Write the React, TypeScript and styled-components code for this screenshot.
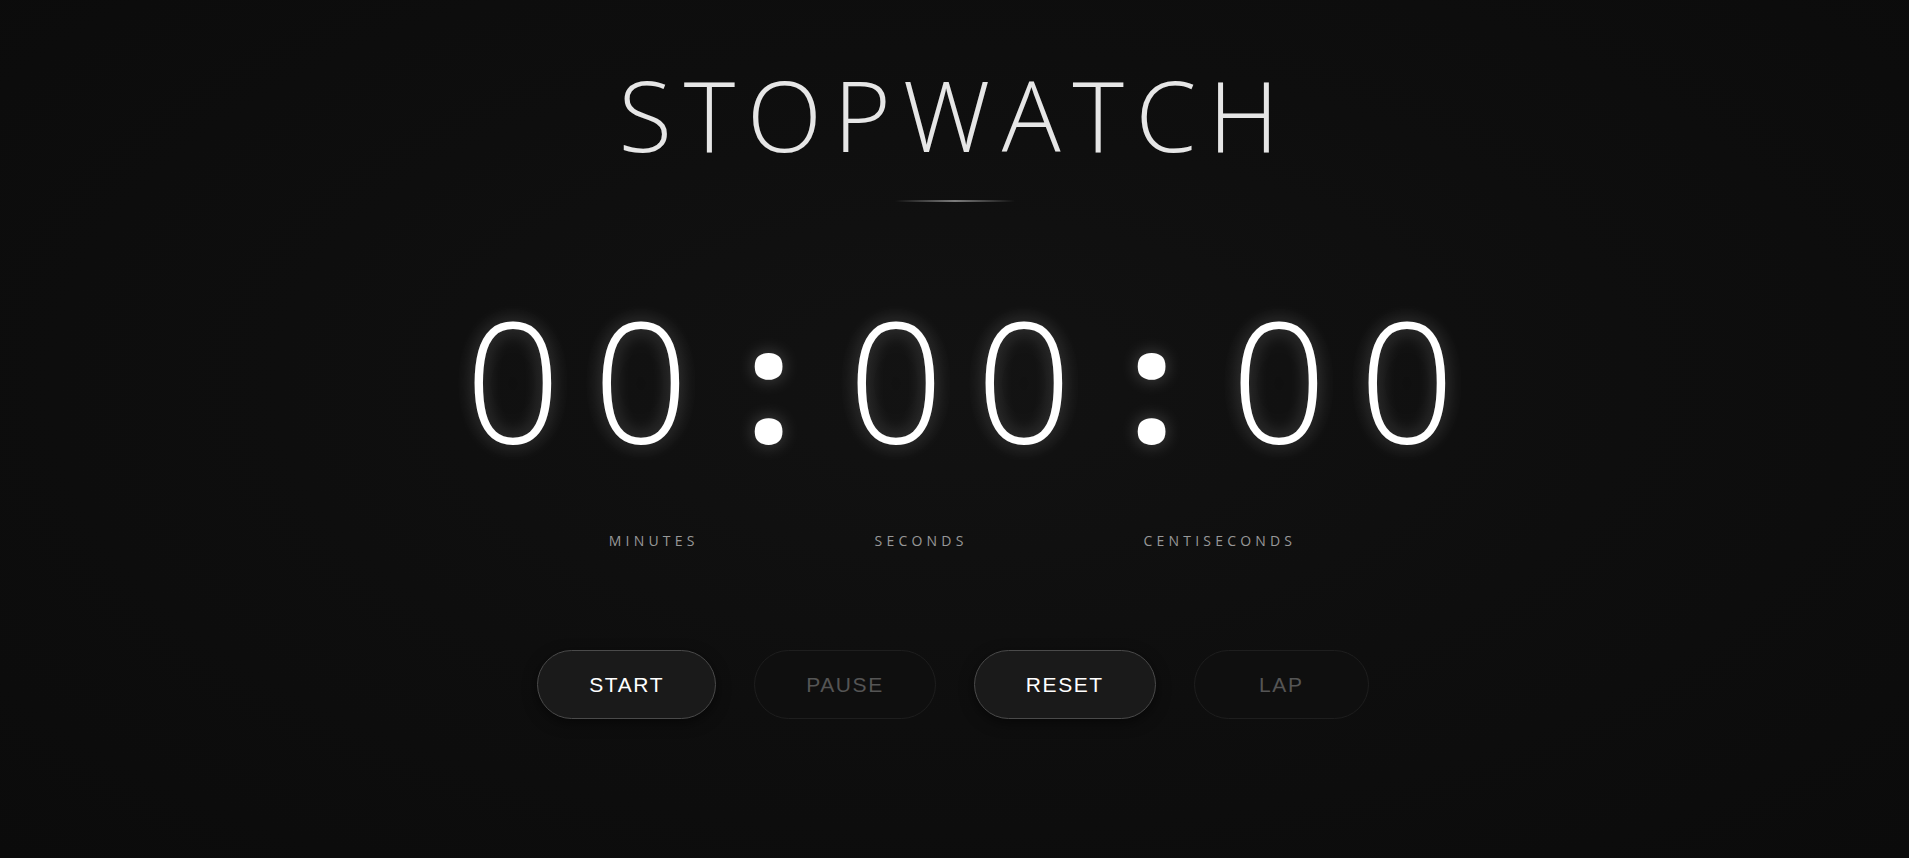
import React from "react";
import styled, { createGlobalStyle } from "styled-components";

const GlobalStyle = createGlobalStyle`
  html, body {
    margin: 0;
    padding: 0;
    height: 100%;
    background: #0c0c0c;
  }
  #root { min-height: 100%; }
`;

const Page = styled.main`
  min-height: 858px;
  box-sizing: border-box;
  display: flex;
  flex-direction: column;
  align-items: center;
  padding-top: 65px;
  background: radial-gradient(ellipse at 50% 45%, #121212 0%, #0e0e0e 50%, #0b0b0b 100%);
  font-family: "Open Sans", "Liberation Sans", sans-serif;
`;

const Title = styled.h1`
  margin: 0;
  font-family: "Open Sans", "Liberation Sans", sans-serif;
  font-weight: 300;
  font-size: 98px;
  line-height: 1;
  letter-spacing: 0.12em;
  color: #e6e6e6;
`;

const Divider = styled.div`
  width: 120px;
  height: 2px;
  margin-top: 37px;
  background: linear-gradient(90deg, rgba(255,255,255,0) 0%, rgba(255,255,255,0.45) 50%, rgba(255,255,255,0) 100%);
`;

const Display = styled.div`
  margin-top: 86px;
  display: flex;
  align-items: baseline;
  height: 180px;
  padding-left: 11px;
`;

const Group = styled.div`
  display: flex;
  align-items: baseline;
  gap: 51px;
`;

const Digit = styled.span`
  width: 77px;
  display: flex;
  justify-content: center;
  font-family: "Open Sans", "Liberation Sans", sans-serif;
  font-weight: 300;
  font-size: 168px;
  line-height: 180px;
  color: #ffffff;
  text-shadow: 0 0 18px rgba(255, 255, 255, 0.25), 0 0 40px rgba(255, 255, 255, 0.08);
`;

const Colon = styled.span`
  width: 30px;
  margin: 0 74px;
  display: flex;
  justify-content: center;
  font-family: "Open Sans", "Liberation Sans", sans-serif;
  font-weight: 700;
  font-size: 162px;
  line-height: 180px;
  color: #ffffff;
  text-shadow: 0 0 18px rgba(255, 255, 255, 0.25);
`;

const Labels = styled.div`
  margin-top: 66px;
  display: flex;
  gap: 176px;
  padding-right: 4px;
`;

const Label = styled.span`
  font-family: "Open Sans", "Liberation Sans", sans-serif;
  font-weight: 400;
  font-size: 14px;
  line-height: 1;
  letter-spacing: 0.3em;
  color: #989898;
`;

const Controls = styled.div`
  margin-top: 102px;
  display: flex;
  gap: 38px;
  padding-right: 3px;
`;

const Button = styled.button<{ $disabled?: boolean }>`
  box-sizing: border-box;
  height: 69px;
  min-width: 175px;
  padding: 0 51px;
  border-radius: 35px;
  border: 1px solid ${(p) => (p.$disabled ? "#1e1e1e" : "#4a4a4a")};
  background: ${(p) => (p.$disabled ? "#0f0f0f" : "#1a1a1a")};
  color: ${(p) => (p.$disabled ? "#555555" : "#ffffff")};
  font-family: "Liberation Sans", Arial, sans-serif;
  font-size: 21px;
  letter-spacing: 1.6px;
  cursor: ${(p) => (p.$disabled ? "default" : "pointer")};
  box-shadow: ${(p) => (p.$disabled ? "none" : "0 4px 14px rgba(0,0,0,0.5)")};
`;

export default function App() {
  return (
    <>
      <GlobalStyle />
      <Page>
        <Title>STOPWATCH</Title>
        <Divider />
        <Display>
          <Group>
            <Digit>0</Digit>
            <Digit>0</Digit>
          </Group>
          <Colon>:</Colon>
          <Group>
            <Digit>0</Digit>
            <Digit>0</Digit>
          </Group>
          <Colon>:</Colon>
          <Group>
            <Digit>0</Digit>
            <Digit>0</Digit>
          </Group>
        </Display>
        <Labels>
          <Label>MINUTES</Label>
          <Label>SECONDS</Label>
          <Label>CENTISECONDS</Label>
        </Labels>
        <Controls>
          <Button>START</Button>
          <Button $disabled>PAUSE</Button>
          <Button>RESET</Button>
          <Button $disabled>LAP</Button>
        </Controls>
      </Page>
    </>
  );
}
